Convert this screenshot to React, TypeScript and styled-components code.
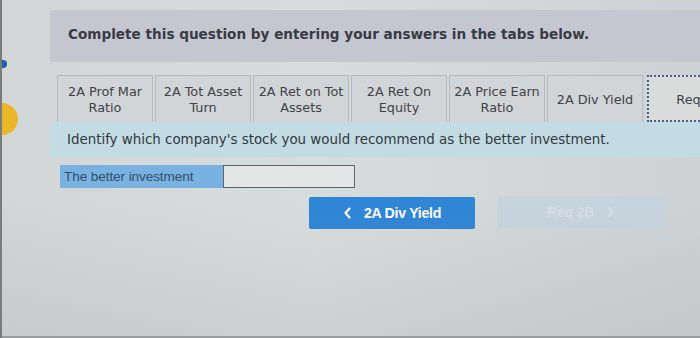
import React from 'react';
import styled, { createGlobalStyle } from 'styled-components';

const GlobalStyle = createGlobalStyle`
  html, body {
    margin: 0;
    padding: 0;
  }
  body {
    width: 700px;
    height: 338px;
    overflow: hidden;
    background: #d4d8d8;
  }
`;

const Screen = styled.div`
  position: relative;
  width: 700px;
  height: 338px;
  overflow: hidden;
  background: linear-gradient(90deg, #d2d6d6 0%, #d9dcdc 45%, #ced2d4 100%);
  border-left: 2px solid #7a7c7c;
  box-sizing: border-box;
`;

const Shade = styled.div`
  position: absolute;
  inset: 0;
  pointer-events: none;
  background: linear-gradient(180deg, rgba(255,255,255,0) 60%, rgba(120,125,130,0.12) 100%);
  border-bottom: 2px solid #9a9c9e;
`;

const Main = styled.div`
  padding: 10px 0 0 48px;
  display: flex;
  flex-direction: column;
`;

const Header = styled.div`
  height: 52px;
  background: #c5c7d0;
  display: flex;
  align-items: center;
  padding-left: 18px;
  font-family: "DejaVu Sans", Verdana, sans-serif;
  font-weight: bold;
  font-size: 13.6px;
  color: #383b44;
  padding-bottom: 4px;
  box-sizing: border-box;
`;

const Tabs = styled.div`
  display: flex;
  gap: 2px;
  margin-top: 13px;
  padding-left: 7px;
  height: 47px;
`;

const Tab = styled.div<{ $focused?: boolean }>`
  flex: 0 0 ${p => (p.$focused ? 104 : 96)}px;
  box-sizing: border-box;
  display: flex;
  align-items: center;
  justify-content: center;
  text-align: center;
  white-space: nowrap;
  font-family: "DejaVu Sans", Verdana, sans-serif;
  font-size: 12.8px;
  line-height: 16px;
  color: #3f4246;
  background: ${p => (p.$focused ? '#dadcdc' : '#d2d5d7')};
  border: ${p => (p.$focused ? '2px dotted #4b5f8e' : '1px solid #b6babd')};
  border-bottom: ${p => (p.$focused ? '2px dotted #4b5f8e' : 'none')};
  margin-left: ${p => (p.$focused ? 2 : 0)}px;
  padding-top: 2px;
`;

const Prompt = styled.div`
  height: 35px;
  background: #c3dbe3;
  display: flex;
  align-items: center;
  padding-left: 17px;
  font-family: "DejaVu Sans", Verdana, sans-serif;
  font-size: 13.4px;
  color: #34383d;
`;

const AnswerRow = styled.div`
  display: flex;
  margin: 8px 0 0 10px;
  height: 23px;
`;

const AnswerLabel = styled.div`
  width: 163px;
  background: #79b2e0;
  display: flex;
  align-items: center;
  padding-left: 4px;
  box-sizing: border-box;
  font-family: "Liberation Sans", Arial, sans-serif;
  font-size: 13.6px;
  letter-spacing: -0.1px;
  color: #34506c;
`;

const AnswerInput = styled.div`
  width: 132px;
  box-sizing: border-box;
  border: 1.5px solid #5b6470;
  background: #e4e6e6;
`;

const Nav = styled.div`
  display: flex;
  gap: 22px;
  margin: 9px 0 0 259px;
`;

const NavButton = styled.div<{ $disabled?: boolean }>`
  width: ${p => (p.$disabled ? 168 : 166)}px;
  height: 32px;
  border-radius: 2px;
  display: flex;
  align-items: center;
  justify-content: center;
  gap: 12px;
  font-family: "Liberation Sans", Arial, sans-serif;
  font-weight: bold;
  font-size: 14.2px;
  letter-spacing: -0.3px;
  color: ${p => (p.$disabled ? '#d6dee5' : '#ffffff')};
  background: ${p => (p.$disabled ? '#c7d3dd' : '#2f86d6')};
  margin-top: ${p => (p.$disabled ? -1 : 0)}px;
  svg {
    width: 9px;
    height: 12px;
  }
`;

const YellowDot = styled.div`
  position: absolute;
  left: -16px;
  top: 103px;
  width: 32px;
  height: 32px;
  border-radius: 50%;
  background: #e8b82a;
`;

const BlueMark = styled.div`
  position: absolute;
  left: -4px;
  top: 60px;
  width: 9px;
  height: 8px;
  border-radius: 4px;
  background: #1f5fa8;
`;

const Chevron = ({ dir }: { dir: 'left' | 'right' }) => (
  <svg viewBox="0 0 9 12" fill="none" stroke="currentColor" strokeWidth="2.2" strokeLinecap="round" strokeLinejoin="round">
    {dir === 'left' ? <path d="M6.5 1.5 2.5 6l4 4.5" /> : <path d="M2.5 1.5 6.5 6l-4 4.5" />}
  </svg>
);

const tabs = [
  ['2A Prof Mar', 'Ratio'],
  ['2A Tot Asset', 'Turn'],
  ['2A Ret on Tot', 'Assets'],
  ['2A Ret On', 'Equity'],
  ['2A Price Earn', 'Ratio'],
  ['2A Div Yield'],
];

export default function App() {
  return (
    <>
      <GlobalStyle />
      <Screen>
        <Main>
          <Header>Complete this question by entering your answers in the tabs below.</Header>
          <Tabs>
            {tabs.map((t, i) => (
              <Tab key={i}>
                <div>
                  {t.map((line, j) => (
                    <div key={j}>{line}</div>
                  ))}
                </div>
              </Tab>
            ))}
            <Tab $focused>Req 2B</Tab>
          </Tabs>
          <Prompt>Identify which company's stock you would recommend as the better investment.</Prompt>
          <AnswerRow>
            <AnswerLabel>The better investment</AnswerLabel>
            <AnswerInput />
          </AnswerRow>
          <Nav>
            <NavButton>
              <Chevron dir="left" />
              <span>2A Div Yield</span>
            </NavButton>
            <NavButton $disabled>
              <span>Req 2B</span>
              <Chevron dir="right" />
            </NavButton>
          </Nav>
        </Main>
        <BlueMark />
        <YellowDot />
        <Shade />
      </Screen>
    </>
  );
}
